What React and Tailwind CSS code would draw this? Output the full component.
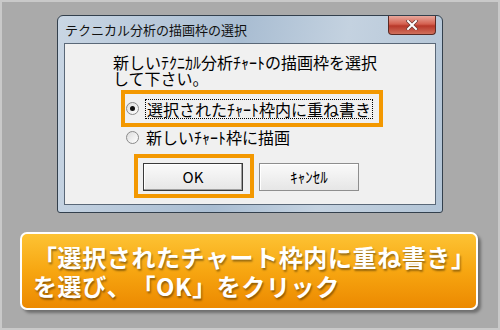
import React from 'react';

const jp = { fontFamily: '"Noto Sans CJK JP", "Noto Sans", sans-serif' };

function Radio({ checked }) {
    return (
        <span className="w-[13px] h-[13px] rounded-full border border-[#8a8a8a] bg-[linear-gradient(135deg,#dcdcdc,#ffffff)] flex items-center justify-center shrink-0">
            {checked && <span className="w-[5px] h-[5px] rounded-full bg-[#111]" />}
        </span>
    );
}

function Button({ label, isDefault }) {
    return (
        <div
            className={`w-[100px] h-[28px] flex items-center justify-center text-[15px] text-black bg-[linear-gradient(#fafafa,#e6e6e6)] border ${
                isDefault
                    ? 'border-[#3a3a3a] shadow-[inset_-1px_-1px_0_#a0a0a0,inset_1px_1px_0_#ffffff]'
                    : 'border-[#8e8e8e] shadow-[inset_1px_1px_0_#ffffff]'
            }`}
        >
            {label}
        </div>
    );
}

export default function App() {
    return (
        <div className="w-[500px] h-[330px] bg-[#c9c9c9] p-[2px]" style={jp}>
            <div className="w-full h-full bg-[#aaaaaa] flex flex-col">
                {/* dialog window */}
                <div className="ml-[55px] mt-[13px] w-[386px] h-[198px] rounded-t-[6px] rounded-b-[3px] border border-[#33404d] bg-[linear-gradient(100deg,#c9d6e4,#a9bdd2_45%,#c4d2e0_70%,#b2c4d6)] flex flex-col">
                    {/* title bar */}
                    <div className="h-[27px] flex items-start justify-between pl-[7px] pr-[6px]">
                        <span className="text-[13px] leading-[28px] text-[#111]">テクニカル分析の描画枠の選択</span>
                        <div className="w-[48px] h-[19px] rounded-b-[4px] border border-[#5a2a24] border-t-0 bg-[linear-gradient(#e9a89c,#d4604f_45%,#b8382a_55%,#d0705c)] flex items-center justify-center">
                            <svg width="12" height="10" viewBox="0 0 12 10">
                                <path d="M2 1 L10 9 M10 1 L2 9" stroke="#6b3a34" strokeWidth="3.4" strokeLinecap="square" />
                                <path d="M2 1 L10 9 M10 1 L2 9" stroke="#ffffff" strokeWidth="2" strokeLinecap="square" />
                            </svg>
                        </div>
                    </div>
                    {/* client area */}
                    <div className="mx-[6px] h-[162px] border border-[#5a6878] bg-[#f0f0f0] text-[16px] leading-[16px] text-black">
                        <div className="pl-[48px] pt-[10px]">
                            <p>新しいﾃｸﾆｶﾙ分析ﾁｬｰﾄの描画枠を選択</p>
                            <p>して下さい。</p>
                        </div>
                        <div className="ml-[56px] mt-[4px] w-[262px] h-[37px] border-4 border-[#f39800] flex items-center">
                            <span className="ml-[1px]">
                                <Radio checked />
                            </span>
                            <span className="ml-[6px] border border-dotted border-black px-[1px] h-[20px] leading-[18px]">
                                選択されたﾁｬｰﾄ枠内に重ね書き
                            </span>
                        </div>
                        <div className="ml-[61px] mt-[2px] h-[16px] flex items-center">
                            <Radio />
                            <span className="ml-[7px]">新しいﾁｬｰﾄ枠に描画</span>
                        </div>
                        <div className="ml-[69px] mt-[9px] flex items-start gap-[5px]">
                            <div className="w-[120px] h-[44px] border-4 border-[#f39800] pl-[5px] pt-[5px]">
                                <Button label="OK" isDefault />
                            </div>
                            <div className="mt-[9px]">
                                <Button label="ｷｬﾝｾﾙ" />
                            </div>
                        </div>
                    </div>
                </div>

                {/* orange caption banner */}
                <div className="ml-[18px] mt-[19px] w-[458px] h-[78px] rounded-[7px] border-2 border-white bg-[linear-gradient(#fdc334,#f7a611_50%,#ec8900)] shadow-[3px_3px_3px_rgba(0,0,0,0.35)] pl-[11px] pt-[8px] text-white font-bold text-[24px] leading-[29px] tracking-[0.6px] [text-spacing-trim:space-all] [text-shadow:1px_2px_2px_rgba(0,0,0,0.4)]">
                    <p>「選択されたチャート枠内に重ね書き」</p>
                    <p>を選び、「OK」をクリック</p>
                </div>
            </div>
        </div>
    );
}
